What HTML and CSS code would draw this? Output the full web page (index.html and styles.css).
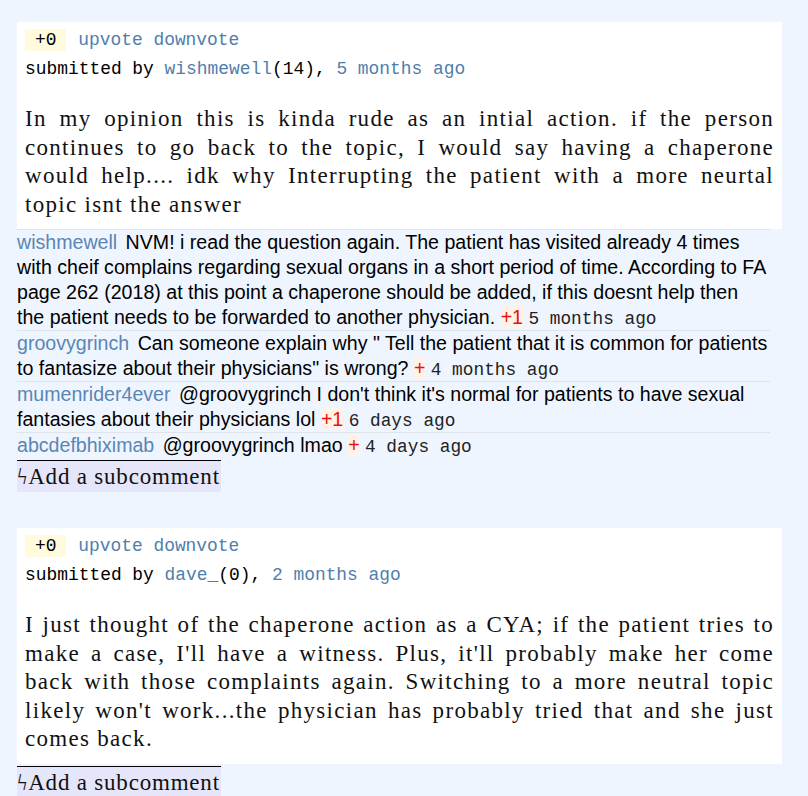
FILE: index.html
```html
<!DOCTYPE html>
<html>
<head>
<meta charset="utf-8">
<link rel="stylesheet" href="styles.css">
</head>
<body>
<div class="thread">
  <div class="comment">
    <div class="post">
      <div class="meta"><span class="score">+0</span> <a class="link">upvote</a> <a class="link">downvote</a></div>
      <div class="meta">submitted by <a class="link">wishmewell</a>(14), <a class="link">5 months ago</a></div>
      <p class="body">In my opinion this is kinda rude as an intial action. if the person continues to go back to the topic, I would say having a chaperone would help.... idk why Interrupting the patient with a more neurtal topic isnt the answer</p>
    </div>
    <ul class="subs">
      <li class="sub"><a class="user">wishmewell</a> NVM! i read the question again. The patient has visited already 4 times with cheif complains regarding sexual organs in a short period of time. According to FA page 262 (2018) at this point a chaperone should be added, if this doesnt help then the patient needs to be forwarded to another physician. <span class="plus">+1</span> <span class="time">5 months ago</span></li>
      <li class="sub"><a class="user">groovygrinch</a> Can someone explain why " Tell the patient that it is common for patients to fantasize about their physicians" is wrong? <span class="plus">+</span> <span class="time">4 months ago</span></li>
      <li class="sub"><a class="user">mumenrider4ever</a> @groovygrinch I don't think it's normal for patients to have sexual fantasies about their physicians lol <span class="plus">+1</span> <span class="time">6 days ago</span></li>
      <li class="sub"><a class="user">abcdefbhiximab</a> @groovygrinch lmao <span class="plus">+</span> <span class="time">4 days ago</span></li>
    </ul>
    <div class="add">ϟAdd a subcomment</div>
  </div>
  <div class="comment">
    <div class="post">
      <div class="meta"><span class="score">+0</span> <a class="link">upvote</a> <a class="link">downvote</a></div>
      <div class="meta">submitted by <a class="link">dave_</a>(0), <a class="link">2 months ago</a></div>
      <p class="body">I just thought of the chaperone action as a CYA; if the patient tries to make a case, I'll have a witness. Plus, it'll probably make her come back with those complaints again. Switching to a more neutral topic likely won't work...the physician has probably tried that and she just comes back.</p>
    </div>
    <ul class="subs"></ul>
    <div class="add">ϟAdd a subcomment</div>
  </div>
</div>
</body>
</html>
```

FILE: styles.css
```css
html, body {
  margin: 0;
  padding: 0;
  background: #eef5fe;
}
body {
  padding: 22px 26px 0 17px;
}
.thread {
  display: flex;
  flex-direction: column;
  gap: 36px;
}
.post {
  background: #ffffff;
  padding: 4px 8px 10px 8px;
}
.meta {
  font-family: "Liberation Mono", "DejaVu Sans Mono", monospace;
  font-size: 17.9px;
  line-height: 29px;
  color: #000;
}
.score {
  display: inline-block;
  background: #fffbdc;
  padding: 0 10px;
  line-height: 22px;
  margin-right: 1px;
}
.link {
  color: #4f7eac;
  text-decoration: none;
}
.body {
  font-family: "Liberation Serif", "DejaVu Serif", serif;
  font-size: 23px;
  letter-spacing: 1.3px;
  line-height: 28.5px;
  text-align: justify;
  margin: 21px 0 0 0;
  color: #111;
}
.subs {
  list-style: none;
  margin: 0;
  padding: 0 0 2px 0;
  margin-right: 12px;
}
.sub {
  border-top: 1px solid #dfe4ea;
  font-family: "Liberation Sans", Arial, sans-serif;
  font-size: 19.6px;
  line-height: 25px;
  padding: 0;
  color: #000;
}
.user {
  color: #5a86b4;
  margin-right: 3px;
}
.plus {
  color: #e8110f;
  background: #fff2e6;
}
.time {
  font-family: "Liberation Mono", monospace;
  font-size: 17.8px;
  line-height: 1;
  color: #222;
}
.add {
  align-self: flex-start;
  width: 204px;
  border-top: 1px solid #000;
  background: #e6e6fa;
  font-family: "Liberation Serif", "DejaVu Serif", serif;
  font-size: 23px;
  letter-spacing: 0.8px;
  line-height: 31px;
  color: #111;
  white-space: nowrap;
}
```
